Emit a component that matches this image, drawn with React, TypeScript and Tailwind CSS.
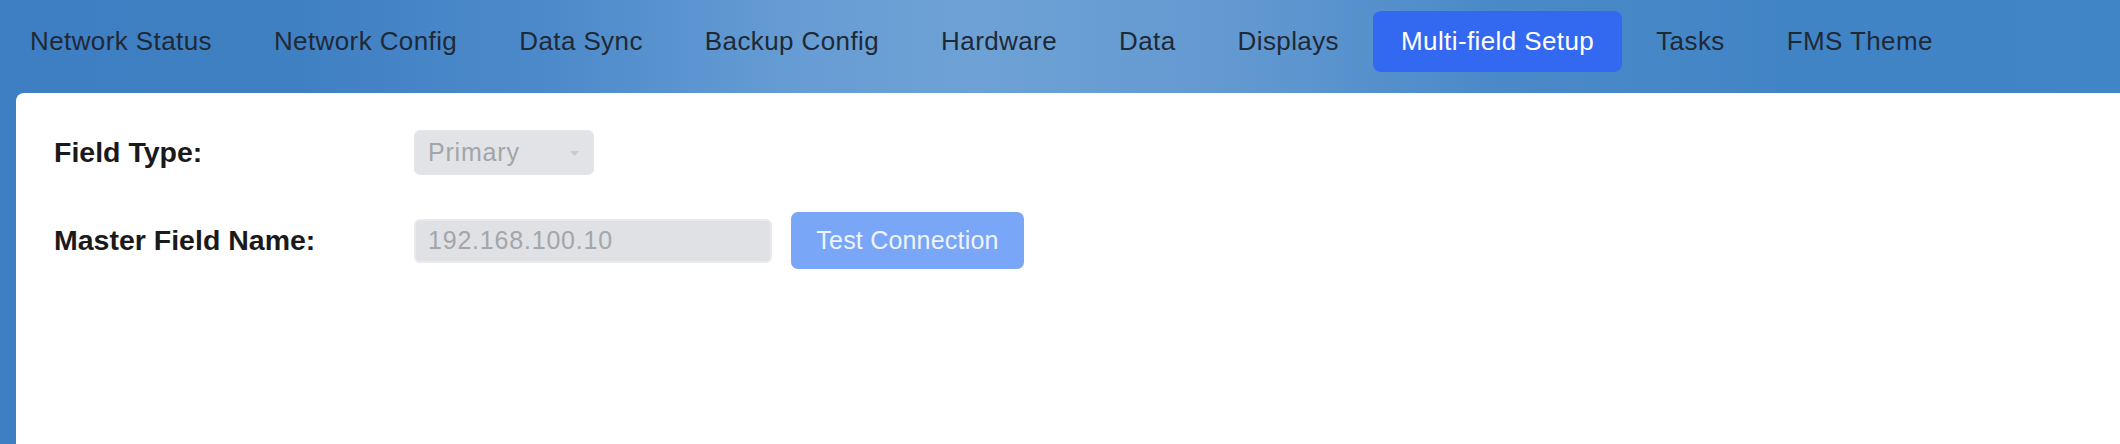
import { useState } from "react"

const tabs = [
  "Network Status",
  "Network Config",
  "Data Sync",
  "Backup Config",
  "Hardware",
  "Data",
  "Displays",
  "Multi-field Setup",
  "Tasks",
  "FMS Theme",
]

export default function App() {
  const [active, setActive] = useState("Multi-field Setup")

  return (
    <div className="flex h-[444px] w-full flex-col overflow-hidden bg-[linear-gradient(90deg,#3e7ec2_0%,#3f80c3_14%,#4d8acb_26%,#679dd4_38%,#6ea2d6_46%,#6399d1_58%,#4b8ac9_70%,#4184c5_85%,#4085c6_100%)] font-['Liberation_Sans',Arial,sans-serif]">
      <nav className="flex gap-[6px] pl-[2px] pt-[11px] pb-[21px]">
        {tabs.map((tab) => (
          <button
            key={tab}
            onClick={() => setActive(tab)}
            className={
              tab === active
                ? "h-[61px] rounded-[8px] bg-[#3369f1] px-[28px] text-[26px] tracking-[0.4px] text-white"
                : "h-[61px] rounded-[8px] px-[28px] text-[26px] tracking-[0.4px] text-[#1f2935]"
            }
          >
            {tab}
          </button>
        ))}
      </nav>

      <section className="ml-[16px] flex-1 rounded-tl-[8px] bg-white pl-[38px] pt-[37px]">
        <div className="flex h-[45px] items-center">
          <label className="w-[360px] text-[28.5px] font-bold text-[#1a1a1a]">Field Type:</label>
          <div className="relative flex h-[45px] w-[180px] items-center rounded-[6px] border border-[#e4e6e9] bg-[#e1e3e6] pl-[13px] text-[25px] tracking-[0.8px] text-[#a2a5aa]">
            Primary
            <svg className="absolute right-[14px] top-[20px]" width="9" height="5" viewBox="0 0 9 5">
              <path d="M0 0h9L4.5 5z" fill="#c8cbcf" />
            </svg>
          </div>
        </div>

        <div className="mt-[37px] flex h-[57px] items-center">
          <label className="w-[360px] text-[28.5px] font-bold text-[#1a1a1a]">Master Field Name:</label>
          <input
            disabled
            value="192.168.100.10"
            className="h-[44px] w-[358px] rounded-[6px] border-2 border-[#e9eaed] bg-[#dfe1e5] pl-[12px] text-[25px] tracking-[0.8px] text-[#a3a6ab]"
          />
          <button
            disabled
            className="ml-[19px] h-[57px] w-[233px] rounded-[7px] bg-[#7aa6f7] text-[25px] tracking-[0.2px] text-[#eef3fe]"
          >
            Test Connection
          </button>
        </div>
      </section>
    </div>
  )
}
